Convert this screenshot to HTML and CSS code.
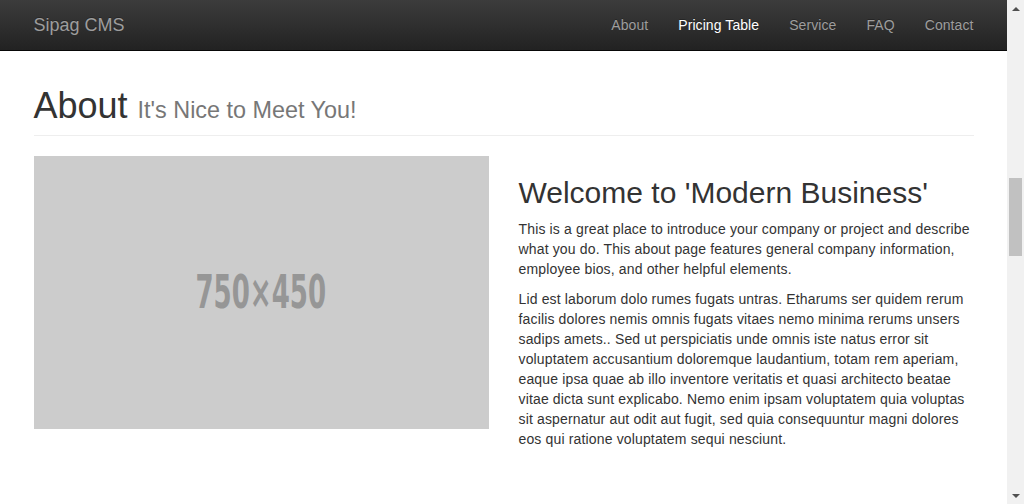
FILE: index.html
```html
<!DOCTYPE html>
<html lang="en">
<head>
<meta charset="utf-8">
<title>Sipag CMS - About</title>
<link rel="stylesheet" href="styles.css">
</head>
<body>
<div class="viewport">
  <div class="page">
    <nav class="navbar">
      <div class="nav-inner">
        <a class="brand" href="#">Sipag CMS</a>
        <ul class="nav-links">
          <li><a href="#">About</a></li>
          <li><a class="active" href="#">Pricing Table</a></li>
          <li><a href="#">Service</a></li>
          <li><a href="#">FAQ</a></li>
          <li><a href="#">Contact</a></li>
        </ul>
      </div>
    </nav>
    <main class="container">
      <h1 class="page-header">About <small>It's Nice to Meet You!</small></h1>
      <div class="row">
        <div class="col">
          <div class="placeholder"><span>750×450</span></div>
        </div>
        <div class="col">
          <h2>Welcome to 'Modern Business'</h2>
          <p>This is a great place to introduce your company or project and describe what you do. This about page features general company information, employee bios, and other helpful elements.</p>
          <p>Lid est laborum dolo rumes fugats untras. Etharums ser quidem rerum facilis dolores nemis omnis fugats vitaes nemo minima rerums unsers sadips amets.. Sed ut perspiciatis unde omnis iste natus error sit voluptatem accusantium doloremque laudantium, totam rem aperiam, eaque ipsa quae ab illo inventore veritatis et quasi architecto beatae vitae dicta sunt explicabo. Nemo enim ipsam voluptatem quia voluptas sit aspernatur aut odit aut fugit, sed quia consequuntur magni dolores eos qui ratione voluptatem sequi nesciunt.</p>
        </div>
      </div>
    </main>
  </div>
  <div class="scrollbar">
    <div class="arrow up"></div>
    <div class="track"><div class="thumb"></div></div>
    <div class="arrow down"></div>
  </div>
</div>
</body>
</html>
```

FILE: styles.css
```css
* { box-sizing: border-box; }
html, body {
  margin: 0;
  padding: 0;
  height: 100%;
  overflow: hidden;
}
body {
  font-family: "Liberation Sans", Arial, sans-serif;
  font-size: 14px;
  line-height: 1.42857143;
  color: #333;
  background: #fff;
}
.viewport {
  display: flex;
  height: 504px;
}
.page {
  width: 1007px;
  flex: none;
}
.navbar {
  height: 51px;
  background: linear-gradient(to bottom, #3c3c3c 0%, #222 100%);
  border-bottom: 1px solid #080808;
}
.nav-inner {
  width: 970px;
  margin: 0 auto;
  padding: 0 15px;
  display: flex;
  justify-content: space-between;
  align-items: stretch;
  height: 50px;
}
.brand {
  font-size: 18px;
  line-height: 20px;
  padding: 15px 0;
  color: #9d9d9d;
  text-decoration: none;
  text-shadow: 0 -1px 0 rgba(0,0,0,.25);
}
.nav-links {
  list-style: none;
  margin: 0 -15px 0 0;
  padding: 0;
  display: flex;
}
.nav-links a {
  display: block;
  padding: 15px 15px;
  line-height: 20px;
  letter-spacing: 0.08px;
  color: #9d9d9d;
  text-decoration: none;
  text-shadow: 0 -1px 0 rgba(0,0,0,.25);
}
.nav-links a.active { color: #fff; }
.container {
  width: 970px;
  margin: 0 auto;
  padding: 35px 15px 0;
}
.page-header {
  margin: 0 0 20px;
  padding-bottom: 9px;
  border-bottom: 1px solid #eee;
  font-size: 36px;
  font-weight: 500;
  line-height: 1.1;
  color: #333;
}
.page-header small {
  font-size: 65%;
  font-weight: 400;
  color: #777;
}
.row {
  display: flex;
  margin: 0 -15px;
}
.col {
  width: 50%;
  padding: 0 15px;
}
.placeholder {
  height: 273px;
  background: #ccc;
  display: flex;
  align-items: center;
  justify-content: center;
}
.placeholder span {
  font-family: "DejaVu Sans Condensed", "DejaVu Sans", sans-serif;
  font-stretch: condensed;
  font-weight: 700;
  font-size: 46px;
  color: #969696;
  line-height: 1;
  transform: scaleX(0.63);
}
h2 {
  margin: 20px 0 10px;
  font-size: 30px;
  font-weight: 500;
  line-height: 1.1;
  color: #333;
}
p {
  margin: 0 0 10px;
  letter-spacing: 0.15px;
}
.scrollbar {
  width: 17px;
  flex: none;
  background: #f1f1f1;
  display: flex;
  flex-direction: column;
}
.arrow {
  height: 17px;
  flex: none;
  display: flex;
  align-items: center;
  justify-content: center;
}
.arrow::before {
  content: "";
  width: 0;
  height: 0;
  border-left: 4px solid transparent;
  border-right: 4px solid transparent;
}
.arrow.up::before { border-bottom: 4px solid #505050; }
.arrow.down::before { border-top: 4px solid #505050; }
.track {
  flex: 1;
  padding-top: 161px;
}
.thumb {
  margin: 0 2px;
  height: 78px;
  background: #c1c1c1;
}
```
